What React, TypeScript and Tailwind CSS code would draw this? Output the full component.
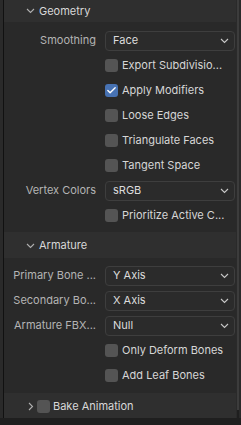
import { Check } from "lucide-react";

type Row =
  | { kind: "select"; label: string; value: string }
  | { kind: "check"; label: string; checked?: boolean };

const geometry: Row[] = [
  { kind: "select", label: "Smoothing", value: "Face" },
  { kind: "check", label: "Export Subdivisio..." },
  { kind: "check", label: "Apply Modifiers", checked: true },
  { kind: "check", label: "Loose Edges" },
  { kind: "check", label: "Triangulate Faces" },
  { kind: "check", label: "Tangent Space" },
  { kind: "select", label: "Vertex Colors", value: "sRGB" },
  { kind: "check", label: "Prioritize Active C..." },
];

const armature: Row[] = [
  { kind: "select", label: "Primary Bone ...", value: "Y Axis" },
  { kind: "select", label: "Secondary Bo...", value: "X Axis" },
  { kind: "select", label: "Armature FBX...", value: "Null" },
  { kind: "check", label: "Only Deform Bones" },
  { kind: "check", label: "Add Leaf Bones" },
];

const ChevronDown = ({ className = "" }: { className?: string }) => (
  <svg width="9" height="6" viewBox="0 0 9 6" className={className}>
    <path d="M1 1 L4.5 4.5 L8 1" fill="none" stroke="currentColor" strokeWidth="1.1" />
  </svg>
);

const ChevronRight = () => (
  <svg width="6" height="9" viewBox="0 0 6 9">
    <path d="M1 1 L4.5 4.5 L1 8" fill="none" stroke="currentColor" strokeWidth="1.1" />
  </svg>
);

const Box = ({ checked }: { checked?: boolean }) =>
  checked ? (
    <div className="w-[13px] h-[13px] rounded-[3px] bg-[#4772b3] flex items-center justify-center">
      <Check size={11} strokeWidth={3} className="text-white" />
    </div>
  ) : (
    <div className="w-[13px] h-[13px] rounded-[3px] bg-[#545454]" />
  );

const RowView = ({ row }: { row: Row }) => (
  <div className="h-[25px] flex items-center">
    <div className="w-[101px] pr-[9px] flex justify-end whitespace-nowrap overflow-hidden text-[#b4b4b4]">
      {row.kind === "select" ? row.label : ""}
    </div>
    {row.kind === "select" ? (
      <div className="w-[130px] h-[20px] rounded-[4px] border border-[#3e3e3e] bg-[#2b2b2b] flex items-center pl-[7px] pr-[5px] text-[#dcdcdc]">
        <span className="flex-1">{row.value}</span>
        <ChevronDown className="text-[#c8c8c8]" />
      </div>
    ) : (
      <div className="flex items-center gap-[4px] text-[#d6d6d6]">
        <Box checked={row.checked} />
        <span>{row.label}</span>
      </div>
    )}
  </div>
);

const Header = ({ title, h }: { title: string; h: string }) => (
  <div className={`${h} flex items-center pl-[22px] gap-[4px] bg-[#2f2f2f] text-[#d8d8d8]`}>
    <ChevronDown className="text-[#b0b0b0]" />
    <span>{title}</span>
  </div>
);

export default function App() {
  return (
    <div
      className="w-[241px] h-[425px] bg-[#1f1f1f] flex text-[11px] overflow-hidden"
      style={{ fontFamily: "Inter, 'Noto Sans', sans-serif" }}
    >
      <div className="w-[3px] h-[418px] bg-[#2a2a2a]" />
      <div className="w-[1px] h-[418px] bg-[#111111]" />
      <div className="w-[232px] h-[418px] flex flex-col bg-[#292929]">
        <Header title="Geometry" h="h-[22px]" />
        <div className="pt-[6px] pb-[4px]">
          {geometry.map((r, i) => (
            <RowView key={i} row={r} />
          ))}
        </div>
        <Header title="Armature" h="h-[26px] pt-[1px]" />
        <div className="pt-[5px] pb-[5px]">
          {armature.map((r, i) => (
            <RowView key={i} row={r} />
          ))}
        </div>
        <div className="h-[25px] flex items-center pl-[24px] gap-[3px] bg-[#2f2f2f] text-[#d8d8d8] pt-[2px]">
          <span className="text-[#b0b0b0] flex">
            <ChevronRight />
          </span>
          <Box />
          <span>Bake Animation</span>
        </div>
      </div>
      <div className="w-[1px] h-[418px] bg-[#2a2a2a]" />
      <div className="w-[2px] h-[410px] bg-[#3c3c3c]" />
      <div className="flex-1 h-[418px] bg-[#2a2a2a]" />
    </div>
  );
}
